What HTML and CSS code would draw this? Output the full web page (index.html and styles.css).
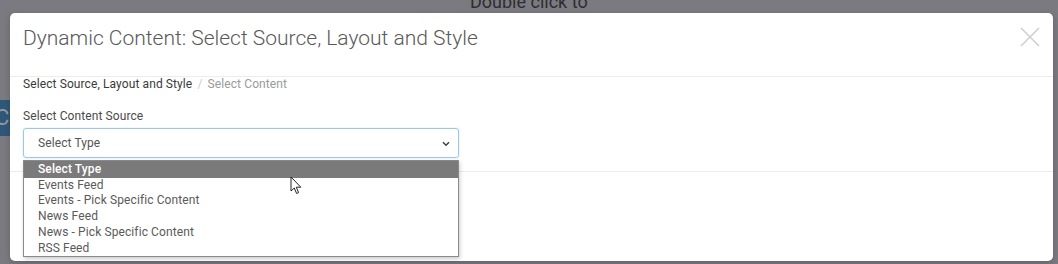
FILE: index.html
```html
<!DOCTYPE html>
<html lang="en">
<head>
  <meta charset="UTF-8">
  <title>Dynamic Content</title>
  <link rel="stylesheet" href="styles.css">
</head>
<body>

  <!-- page behind the overlay -->
  <div class="backdrop-text">Double click to</div>
  <div class="backdrop-tab">C</div>

  <div class="modal">
    <div class="modal-header">
      <h4 class="modal-title">Dynamic Content: Select Source, Layout and Style</h4>
      <button class="close-btn" aria-label="Close">
        <svg width="20" height="20" viewBox="0 0 20 20">
          <path d="M1 1 L19 19 M19 1 L1 19" stroke="#cfcfcf" stroke-width="1.6" fill="none"/>
        </svg>
      </button>
    </div>

    <div class="modal-body">
      <div class="crumbs">
        <span class="crumb-active">Select Source, Layout and Style</span>
        <span class="crumb-sep">/</span>
        <span class="crumb">Select Content</span>
      </div>

      <label class="field-label">Select Content Source</label>
      <div class="select-wrap">
        <div class="select-box">
          <span>Select Type</span>
          <svg class="chevron" width="8" height="6" viewBox="0 0 8 6">
            <path d="M1 1.2 L4 4.2 L7 1.2" stroke="#444" stroke-width="1.6" fill="none"/>
          </svg>
        </div>

        <ul class="select-list">
          <li class="selected">Select Type</li>
          <li>Events Feed</li>
          <li>Events - Pick Specific Content</li>
          <li>News Feed</li>
          <li>News - Pick Specific Content</li>
          <li>RSS Feed</li>
        </ul>

        <svg class="cursor" width="12" height="19" viewBox="0 0 12 19">
          <path d="M1 1 L1 15 L4.3 12 L6.6 17.5 L8.6 16.6 L6.3 11.2 L10.8 11.2 Z" fill="#fff" stroke="#222" stroke-width="1"/>
        </svg>
      </div>
    </div>

    <div class="modal-footer"></div>
  </div>

</body>
</html>
```

FILE: styles.css
```css
/* Reset and basic styles */
* {
  margin: 0;
  padding: 0;
  box-sizing: border-box;
}

body {
  width: 1058px;
  height: 264px;
  overflow: hidden;
  background: #7b7a80;
  font-family: Roboto, "Noto Sans", Arial, sans-serif;
  position: relative;
  padding: 13px 5px 0 10px;
}

/* Things on the page under the grey overlay */
.backdrop-text {
  position: absolute;
  top: -9px;
  left: 470px;
  font-size: 18px;
  color: #2e2e30;
}

.backdrop-tab {
  position: absolute;
  top: 100px;
  left: 0;
  width: 10px;
  height: 36px;
  background: #2f5878;
  color: #8e9aa5;
  font-size: 22px;
  line-height: 36px;
  overflow: hidden;
  text-indent: -5px;
}

/* Modal window */
.modal {
  position: relative;
  height: 248px;
  background: #fff;
  border-radius: 5px;
  box-shadow: 0 2px 6px rgba(0, 0, 0, 0.2);
  display: flex;
  flex-direction: column;
}

.modal-header {
  height: 64px;
  padding: 12px 12px 0 13px;
  border-bottom: 1px solid #ececec;
  display: flex;
  justify-content: space-between;
  align-items: flex-start;
}

.modal-title {
  font-size: 21px;
  font-weight: 300;
  line-height: 26px;
  color: #595959;
}

.close-btn {
  border: none;
  background: none;
  margin-top: 2px;
  margin-right: 1px;
  cursor: pointer;
}

.modal-body {
  padding: 0 13px 13px;
  border-bottom: 1px solid #ececec;
}

.crumbs {
  font-size: 12px;
  line-height: 14px;
  letter-spacing: 0.1px;
  color: #3a3a3a;
}

.crumb-sep {
  color: #ccc;
  padding: 0 2px;
}

.crumb {
  color: #9a9a9a;
}

.field-label {
  display: block;
  margin-top: 18px;
  font-size: 12px;
  line-height: 14px;
  letter-spacing: 0.1px;
  color: #4a4a4a;
}

.select-wrap {
  position: relative;
  width: 436px;
  margin-top: 5px;
}

.select-box {
  height: 30px;
  border: 1px solid #9cc6ea;
  border-radius: 3px;
  box-shadow: 0 0 2px rgba(102, 175, 233, 0.35);
  padding: 0 8px 0 14px;
  display: flex;
  align-items: center;
  justify-content: space-between;
  font-size: 12px;
  letter-spacing: 0.1px;
  color: #555;
}

.chevron {
  margin-top: 1px;
}

/* Open dropdown list */
.select-list {
  position: absolute;
  top: 32px;
  left: 0;
  width: 436px;
  list-style: none;
  background: #fff;
  border: 1px solid #8a8a8a;
  box-shadow: 1px 2px 4px rgba(0, 0, 0, 0.2);
  z-index: 5;
}

.select-list li {
  height: 15.8px;
  line-height: 15.8px;
  padding-left: 14px;
  font-size: 12px;
  letter-spacing: 0.1px;
  color: #5a5a5a;
}

.select-list li.selected {
  background: #7a7a7a;
  color: #fff;
  font-weight: 500;
  height: 16.5px;
  line-height: 16.5px;
}

.cursor {
  position: absolute;
  top: 48px;
  left: 267px;
  z-index: 6;
}

.modal-footer {
  flex: 1;
}
```
